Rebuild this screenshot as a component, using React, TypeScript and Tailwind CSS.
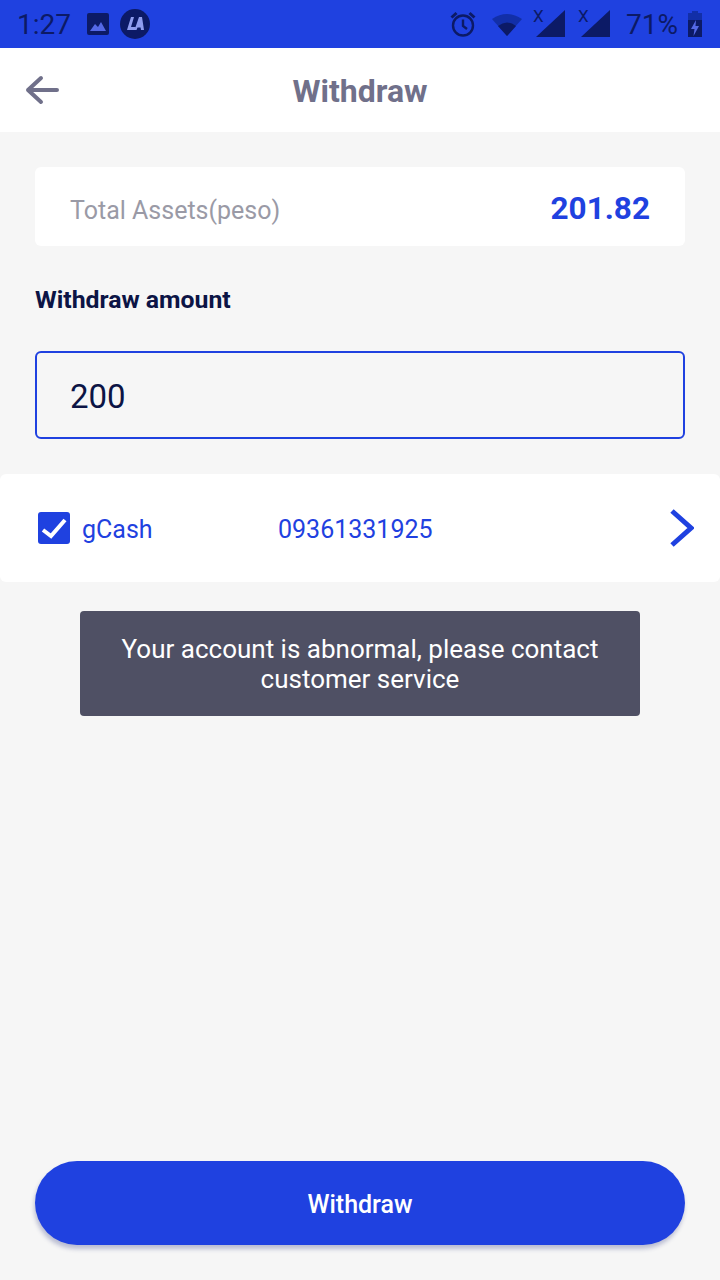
const dark = '#0c1a66'

function SignalIcon({ className }: { className: string }) {
  return (
    <div className={`relative w-[31px] h-[28px] ${className}`}>
      <svg width="31" height="28" viewBox="0 0 31 28" className="absolute inset-0">
        <path d="M1 27 L30 0 V27 Z" fill={dark} />
      </svg>
      <span className="absolute left-[-2px] top-[-2px] text-[17px] leading-none">X</span>
    </div>
  )
}

function StatusBar() {
  return (
    <div className="h-12 bg-[#1f41e0] flex items-center justify-between pl-[17px] pr-[18px] text-[#0c1a66]">
      <div className="flex items-center">
        <span className="pt-[2px] text-[28px] leading-none">1:27</span>
        <svg width="24" height="24" viewBox="0 0 24 24" className="ml-[15px]">
          <rect x="1" y="1" width="22" height="22" rx="2" fill={dark} />
          <path d="M4 19 L9 12 L12 15 L15 10 L20 19 Z" fill="#5468e6" />
        </svg>
        <svg width="30" height="30" viewBox="0 0 30 30" className="ml-[10px]">
          <circle cx="15" cy="15" r="15" fill={dark} />
          <path d="M11 8 H14 L11 18 H16 L15 21 H7 Z" fill="#8f9df0" />
          <path d="M19 8 H22 L24 21 H21 L20.6 18.5 H17.5 L16.5 21 H14.5 Z" fill="#8f9df0" />
        </svg>
      </div>
      <div className="flex items-center">
        <svg width="28" height="28" viewBox="0 0 28 28" fill="none" stroke={dark} strokeWidth="2.4">
          <circle cx="14" cy="15.5" r="10" />
          <path d="M14 9.5 V16 L18 19" />
          <path d="M2.5 7.5 L7.5 3 M25.5 7.5 L20.5 3" strokeWidth="3" />
        </svg>
        <svg width="30" height="24" viewBox="0 0 30 24" className="ml-[15px]">
          <path d="M0 7 Q15 -3 30 7 L15 24 Z" fill="#122fa8" />
          <path d="M6 14 Q15 7 24 14 L15 24 Z" fill={dark} />
        </svg>
        <SignalIcon className="ml-[13px]" />
        <SignalIcon className="ml-[14px]" />
        <span className="ml-[15px] pt-[2px] text-[28px] leading-none">71%</span>
        <svg width="14" height="26" viewBox="0 0 14 26" className="ml-[10px]">
          <path d="M4 0 H10 V2 H14 V26 H0 V2 H4 Z" fill="#122fa8" />
          <rect x="0" y="9" width="14" height="17" fill={dark} />
          <path d="M8 9 L3 18 H6.5 L5.5 25 L11 15 H7.5 Z" fill="#5468e6" />
        </svg>
      </div>
    </div>
  )
}

export default function App() {
  return (
    <div className="w-[720px] h-[1280px] bg-[#f6f6f6] flex flex-col font-['Roboto',sans-serif]">
      <StatusBar />

      <div className="h-[84px] bg-white relative flex items-center justify-center">
        <svg width="36" height="30" viewBox="0 0 36 30" fill="none" stroke="#70708a" strokeWidth="4" strokeLinecap="round" strokeLinejoin="round" className="absolute left-[25px] top-[27px]">
          <path d="M3 15 H32 M16 3 L3 15 L16 27" />
        </svg>
        <span className="pt-[2px] text-[32px] font-bold text-[#70708a]">Withdraw</span>
      </div>

      <div className="flex-1 flex flex-col px-[35px] pt-[35px] pb-[35px]">
        <div className="h-[79px] bg-white rounded-[6px] flex items-center justify-between px-[35px]">
          <span className="pt-[8px] text-[25px] text-[#9a9aa6]">Total Assets(peso)</span>
          <span className="pt-[4px] text-[31.5px] font-bold text-[#1f41e0]">201.82</span>
        </div>

        <div className="mt-[37px] h-[34px] text-[24.8px] font-bold leading-[34px] text-[#0c1445]">Withdraw amount</div>

        <div className="mt-[34px] h-[88px] pt-[4px] border-2 border-[#1f41e0] rounded-[6px] flex items-center px-[33px] text-[33px] text-[#0c1445]">
          200
        </div>

        <div className="mt-[35px] -mx-[35px] h-[108px] bg-white rounded-[6px] flex items-center justify-between pl-[38px] pr-[26px] text-[25px] text-[#1f41e0]">
          <div className="flex items-center">
            <span className="w-8 h-8 bg-[#1f41e0] rounded-[3px] flex items-center justify-center">
              <svg width="32" height="32" viewBox="0 0 32 32" fill="none" stroke="#fff" strokeWidth="4">
                <path d="M5 18 L13 24 L27 8" />
              </svg>
            </span>
            <span className="ml-[12px] pt-[4px] w-[196px]">gCash</span>
            <span className="pt-[4px]">09361331925</span>
          </div>
          <svg width="24" height="38" viewBox="0 0 24 38" fill="none" stroke="#1f41e0" strokeWidth="5">
            <path d="M2 2 L21 19 L2 36" />
          </svg>
        </div>

        <div className="mt-[29px] mx-[45px] h-[105px] bg-[#4f5064] rounded-[4px] flex items-center justify-center text-center text-[26px] leading-[30px] text-white">
          <span>Your account is abnormal, please contact<br />customer service</span>
        </div>

        <div className="mt-auto h-[84px] pt-[4px] rounded-full bg-[#1f41e0] shadow-[-1px_4px_4px_rgba(50,60,130,0.3)] flex items-center justify-center text-[25px] font-medium text-white">
          Withdraw
        </div>
      </div>
    </div>
  )
}
